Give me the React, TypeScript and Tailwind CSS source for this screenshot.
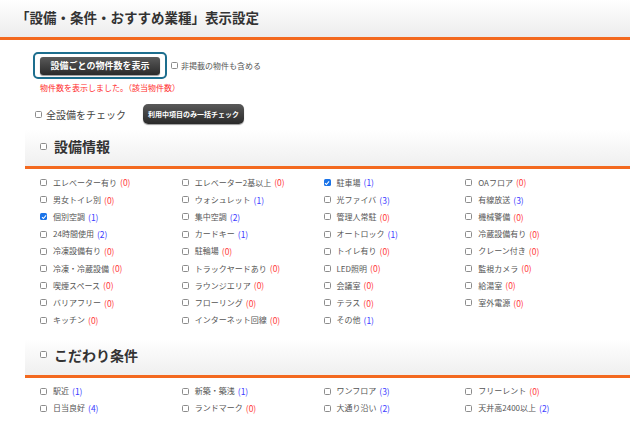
import React from "react";

type Item = [string, number, boolean?];

const sec1: Item[] = [
  ["エレベーター有り", 0], ["エレベーター2基以上", 0], ["駐車場", 1, true], ["OAフロア", 0],
  ["男女トイレ別", 0], ["ウォシュレット", 1], ["光ファイバ", 3], ["有線放送", 3],
  ["個別空調", 1, true], ["集中空調", 2], ["管理人常駐", 0], ["機械警備", 0],
  ["24時間使用", 2], ["カードキー", 1], ["オートロック", 1], ["冷蔵設備有り", 0],
  ["冷凍設備有り", 0], ["駐輪場", 0], ["トイレ有り", 0], ["クレーン付き", 0],
  ["冷凍・冷蔵設備", 0], ["トラックヤードあり", 0], ["LED照明", 0], ["監視カメラ", 0],
  ["喫煙スペース", 0], ["ラウンジエリア", 0], ["会議室", 0], ["給湯室", 0],
  ["バリアフリー", 0], ["フローリング", 0], ["テラス", 0], ["室外電源", 0],
  ["キッチン", 0], ["インターネット回線", 0], ["その他", 1],
];

const sec2: Item[] = [
  ["駅近", 1], ["新築・築浅", 1], ["ワンフロア", 3], ["フリーレント", 0],
  ["日当良好", 4], ["ランドマーク", 0], ["大通り沿い", 2], ["天井高2400以上", 2],
];

function Box({ checked = false }: { checked?: boolean }) {
  if (checked) {
    return (
      <span className="inline-flex w-[7px] h-[7px] shrink-0 items-center justify-center rounded-[1.5px] bg-[#1a73e8]">
        <svg viewBox="0 0 8 8" className="w-[6px] h-[6px]">
          <path d="M1.3 4.2 L3.2 6 L6.8 1.8" fill="none" stroke="#fff" strokeWidth="1.4" />
        </svg>
      </span>
    );
  }
  return <span className="inline-block w-[7px] h-[7px] shrink-0 rounded-[1.5px] border border-[#8c8c8c] bg-white" />;
}

function Grid({ items }: { items: Item[] }) {
  return (
    <div className="ml-[40px] mt-[5px] grid w-[567px] grid-cols-4">
      {items.map(([label, n, checked], i) => (
        <div key={i} className="flex h-[17.2px] items-center text-[8px] leading-none">
          <Box checked={!!checked} />
          <span className="ml-[6px] text-[#555]">{label}</span>
          <span className={"ml-[3px] text-[8.5px] " + (n === 0 ? "text-[#ff3b3b]" : "text-[#3d3dff]")}>({n})</span>
        </div>
      ))}
    </div>
  );
}

function SectionHead({ title }: { title: string }) {
  return (
    <div className="ml-[25px] flex h-[39px] items-start border-b-[3px] border-[#f3691f] bg-linear-to-b from-white to-[#efefef] pl-[15px] pt-[7px]">
      <div className="flex h-[18px] items-center">
        <Box />
        <span className="ml-[7px] text-[14px] font-bold leading-none text-[#333]">{title}</span>
      </div>
    </div>
  );
}

export default function App() {
  return (
    <div className="w-[630px] h-[429px] overflow-hidden bg-white font-['Noto_Sans_CJK_JP',sans-serif]">
      <div className="flex h-[40px] items-start border-b-[3px] border-[#f3691f] bg-linear-to-b from-white to-[#ececec] pl-[16px] pt-[8px]">
        <span className="text-[13.5px] font-bold leading-[18px] text-[#333]">「設備・条件・おすすめ業種」表示設定</span>
      </div>

      <div className="ml-[33px] mt-[12px] flex items-center">
        <div className="rounded-[5px] border-[2px] border-[#1d6e8e] px-[5px] py-[2.5px]">
          <div className="flex h-[18px] w-[120px] items-center justify-center rounded-[3px] bg-linear-to-b from-[#5a5a5a] to-[#2b2b2b] text-[9px] font-bold text-white shadow-[0_1px_1px_rgba(0,0,0,0.4)]">
            設備ごとの物件数を表示
          </div>
        </div>
        <div className="ml-[4px] flex items-center">
          <Box />
          <span className="ml-[3px] text-[8px] text-[#555]">非掲載の物件も含める</span>
        </div>
      </div>

      <div className="ml-[40px] mt-[4px] text-[8px] leading-[10px] text-[#ff2a2a]">物件数を表示しました。（該当物件数）</div>

      <div className="ml-[35px] mt-[11px] flex h-[20px] items-center">
        <Box />
        <span className="ml-[4px] text-[10px] text-[#444]">全設備をチェック</span>
        <div className="ml-[17px] flex h-[20px] w-[101px] items-center justify-center rounded-[5px] bg-linear-to-b from-[#5a5a5a] to-[#2a2a2a] text-[7px] font-bold text-white shadow-[0_1px_1px_rgba(0,0,0,0.4)]">
          利用中項目のみ一括チェック
        </div>
      </div>

      <div className="mt-[6px]">
        <SectionHead title="設備情報" />
        <Grid items={sec1} />
      </div>

      <div className="mt-[10px]">
        <SectionHead title="こだわり条件" />
        <Grid items={sec2} />
      </div>
    </div>
  );
}
